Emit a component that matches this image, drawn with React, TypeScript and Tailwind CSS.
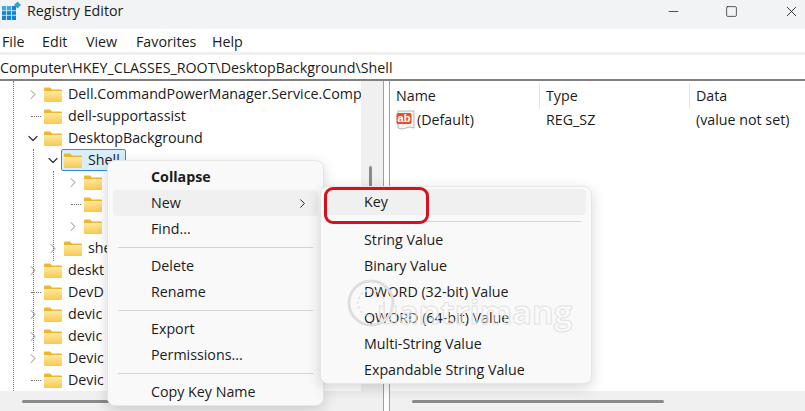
import { ChevronDown, ChevronRight, Minus, Square, X } from 'lucide-react';

const Folder = () => (
  <svg width="18" height="15" viewBox="0 0 18 15" className="shrink-0">
    <defs>
      <linearGradient id="fold" x1="0" y1="0" x2="0" y2="1">
        <stop offset="0" stopColor="#ffe9a0" />
        <stop offset="1" stopColor="#f7c94f" />
      </linearGradient>
    </defs>
    <path d="M0 1.5 Q0 0.5 1 0.5 H6 L8 2.5 H17 Q18 2.5 18 3.5 V5 H0 Z" fill="#eeb52f" />
    <path d="M0 4 H18 V14 Q18 15 17 15 H1 Q0 15 0 14 Z" fill="url(#fold)" />
  </svg>
);

type Row = { name: string; depth: 0 | 1 | 2; toggle: 'right' | 'down' | 'none'; selected?: boolean };

// names under the context menu are cut where the menu starts
const rows: Row[] = [
  { name: 'Dell.CommandPowerManager.Service.Comp', depth: 0, toggle: 'right' },
  { name: 'dell-supportassist', depth: 0, toggle: 'none' },
  { name: 'DesktopBackground', depth: 0, toggle: 'down' },
  { name: 'Shell', depth: 1, toggle: 'down', selected: true },
  { name: '', depth: 2, toggle: 'right' },
  { name: '', depth: 2, toggle: 'none' },
  { name: '', depth: 2, toggle: 'right' },
  { name: 'she', depth: 1, toggle: 'right' },
  { name: 'deskt', depth: 0, toggle: 'right' },
  { name: 'DevD', depth: 0, toggle: 'none' },
  { name: 'devic', depth: 0, toggle: 'right' },
  { name: 'devic', depth: 0, toggle: 'right' },
  { name: 'Devic', depth: 0, toggle: 'right' },
  { name: 'Devic', depth: 0, toggle: 'none' },
];

const depthPad = { 0: 'pl-[25px]', 1: 'pl-[45px]', 2: 'pl-[65px]' };

const TreeRow = ({ row }: { row: Row }) => (
  <div className={`flex h-[22px] items-center whitespace-nowrap ${depthPad[row.depth]}`}>
    <span className="flex w-[16px] shrink-0 justify-center">
      {row.toggle === 'right' && <ChevronRight size={17} strokeWidth={1.5} className="text-[#8a8a8a]" />}
      {row.toggle === 'down' && <ChevronDown size={17} strokeWidth={1.8} className="text-[#333]" />}
      {row.toggle === 'none' && <span className="ml-[6px] h-0 w-[10px] border-t border-dotted border-[#777]" />}
    </span>
    {row.selected ? (
      <span className="flex h-[22px] items-center gap-[6px] rounded-[2px] border border-[#2f8fd0] bg-[#d9eefb] pr-[5px] pl-[2px]">
        <Folder />
        <span>{row.name}</span>
      </span>
    ) : (
      <span className="ml-[3px] flex items-center gap-[6px]">
        <Folder />
        <span>{row.name}</span>
      </span>
    )}
  </div>
);

const Item = ({ label, active, bold, arrow }: { label: string; active?: boolean; bold?: boolean; arrow?: boolean }) => (
  <div className={`mx-[5px] flex h-[26px] items-center justify-between rounded-[4px] pl-[38px] ${active ? 'bg-[#f0f0f0]' : ''} ${bold ? 'font-bold' : ''}`}>
    <span>{label}</span>
    {arrow && <ChevronRight size={15} strokeWidth={1.6} className="mr-[8px] text-[#222]" />}
  </div>
);

const Sep = ({ h }: { h: string }) => (
  <div className={`flex items-center px-[10px] ${h}`}>
    <div className="h-px w-full bg-[#d4d4d4]" />
  </div>
);

export default function App() {
  return (
    <div
      className="relative flex h-[411px] w-[805px] flex-col overflow-hidden bg-white text-[14.25px] text-[#1b1b1b]"
      style={{ fontFamily: '"Open Sans", "Noto Sans", sans-serif' }}
    >
      <div className="flex h-[29px] shrink-0 items-center bg-[#f1f3f4] pb-[7px]">
        <svg width="20" height="20" viewBox="0 0 20 20" className="ml-[1px] shrink-0">
          <path d="M1 5 H15 V19 H1 Z" fill="#1483cf" />
          <path d="M1 5 H11 V9 H1 Z" fill="#39a9e8" />
          <path d="M5.5 5 V19 M10.5 5 V19 M1 9.7 H15 M1 14.3 H15" stroke="#d5ebf8" strokeWidth="0.9" />
          <path d="M16.5 0.5 L20 4 L16.5 7.5 L13 4 Z" fill="#37a3c9" />
        </svg>
        <span className="ml-[6px]">Registry Editor</span>
        <div className="ml-auto flex items-center">
          <Minus size={15} strokeWidth={1.2} className="mr-[44px]" />
          <Square size={13} strokeWidth={1.3} className="mr-[45px]" />
          <X size={17} strokeWidth={1.2} className="mr-[5px]" />
        </div>
      </div>

      <div className="flex h-[23px] shrink-0 items-center pt-[2px] pl-[2px]">
        <span className="w-[40px]">File</span>
        <span className="w-[44px]">Edit</span>
        <span className="w-[50px]">View</span>
        <span className="w-[76px]">Favorites</span>
        <span>Help</span>
      </div>
      <div className="h-[3px] shrink-0 bg-[#f0f0f0]" />
      <div className="flex h-[24px] shrink-0 items-center whitespace-nowrap pt-[2px]">
        Computer\HKEY_CLASSES_ROOT\DesktopBackground\Shell
      </div>
      <div className="h-[2px] shrink-0 bg-[#808080]" />

      <div className="flex min-h-0 flex-1">
        <div className="flex w-[383px] shrink-0 flex-col">
          <div className="flex min-h-0 flex-1">
            <div className="relative w-[361px] shrink-0 overflow-hidden pt-[2px]">
              <div className="absolute top-0 bottom-0 left-[13px] border-l border-dotted border-[#777]" />
              <div className="absolute top-[68px] bottom-[40px] left-[33px] border-l border-dotted border-[#777]" />
              <div className="absolute top-[90px] bottom-[130px] left-[53px] border-l border-dotted border-[#777]" />
              {rows.map((r, i) => (
                <TreeRow key={i} row={r} />
              ))}
            </div>
            <div className="flex w-[22px] flex-1 justify-start bg-[#f0f0f0] pt-[85px] pl-[8px]">
              <div className="h-[40px] w-[3px] rounded-full bg-[#8a8a8a]" />
            </div>
          </div>
          <div className="flex h-[20px] shrink-0 items-center bg-[#f0f0f0] pl-[22px]">
            <div className="h-[3px] w-[120px] rounded-full bg-[#8a8a8a]" />
          </div>
        </div>

        <div className="flex w-[7px] shrink-0 justify-between border-x border-[#a0a0a0] bg-white" />

        <div className="flex min-w-0 flex-1 flex-col">
          <div className="flex-1">
            <div className="flex h-[28px] items-center pt-[1px]">
              <span className="flex h-[26px] w-[150px] items-center border-r border-[#e5e5e5] pl-[6px]">Name</span>
              <span className="flex h-[26px] w-[150px] items-center border-r border-[#e5e5e5] pl-[6px]">Type</span>
              <span className="pl-[6px]">Data</span>
            </div>
            <div className="flex h-[22px] items-center">
              <span className="flex w-[150px] items-center pl-[6px]">
                <svg width="19" height="20" viewBox="0 0 19 20" className="shrink-0">
                  <path d="M2 1 H18 V18 Q14 16 10 18 Q6 20 2 18 Z" fill="#f4f4f4" stroke="#b8b8b8" />
                  <rect x="0.5" y="3" width="15" height="11" rx="1.5" fill="#e2512d" />
                  <text x="8" y="12" textAnchor="middle" fontSize="11" fontWeight="700" fill="#fff" fontFamily="Liberation Sans">ab</text>
                </svg>
                <span className="ml-[2px]">(Default)</span>
              </span>
              <span className="w-[150px] pl-[6px]">REG_SZ</span>
              <span className="pl-[6px]">(value not set)</span>
            </div>
          </div>
          <div className="flex h-[20px] shrink-0 items-center bg-[#f0f0f0] pl-[22px]">
            <div className="h-[3px] w-[252px] rounded-full bg-[#8a8a8a]" />
          </div>
        </div>
      </div>

      <div className="absolute top-[160px] left-[107px] w-[217px] rounded-[8px] border border-[#e6e6e6] bg-[#f9f9f9] pt-[3px] shadow-[0_4px_14px_rgba(0,0,0,0.16)]">
        <Item label="Collapse" bold />
        <Item label="New" active arrow />
        <Item label="Find..." />
        <Sep h="h-[11px]" />
        <Item label="Delete" />
        <Item label="Rename" />
        <Sep h="h-[11px]" />
        <Item label="Export" />
        <Item label="Permissions..." />
        <Sep h="h-[11px]" />
        <Item label="Copy Key Name" />
      </div>

      <div className="absolute top-[186px] left-[320px] w-[272px] rounded-[8px] border border-[#e6e6e6] bg-[#f9f9f9] pt-[2px] shadow-[0_4px_14px_rgba(0,0,0,0.16)]">
        <Item label="Key" active />
        <Sep h="h-[12px]" />
        <Item label="String Value" />
        <Item label="Binary Value" />
        <Item label="DWORD (32-bit) Value" />
        <Item label="QWORD (64-bit) Value" />
        <Item label="Multi-String Value" />
        <Item label="Expandable String Value" />
      </div>

      <div className="absolute top-[187px] left-[324px] h-[37px] w-[105px] rounded-[9px] border-[3px] border-[#d7101f]" />

      <svg width="50" height="52" viewBox="0 0 50 52" className="pointer-events-none absolute top-[277px] left-[346px]">
        <circle cx="25" cy="26" r="22" fill="none" stroke="#dedede" strokeWidth="3" />
        <circle cx="25" cy="26" r="13" fill="none" stroke="#e2e2e2" strokeWidth="2" strokeDasharray="2 3" />
      </svg>
      <span className="pointer-events-none absolute top-[287px] left-[377px] text-[33px] font-bold text-white/30 [-webkit-text-stroke:1px_#e2e2e2]">
        uantrimang
      </span>
    </div>
  );
}
